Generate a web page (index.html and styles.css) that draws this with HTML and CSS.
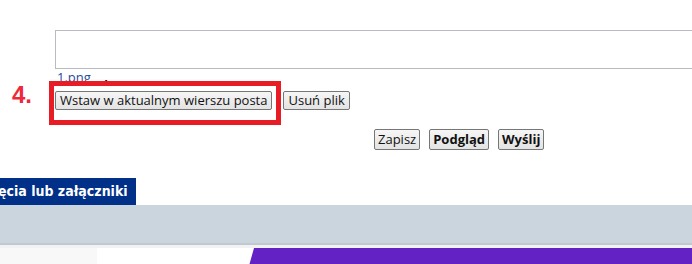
FILE: index.html
```html
<!DOCTYPE html>
<html lang="pl">
<head>
  <meta charset="UTF-8">
  <title>Odpowiedz - załączniki</title>
  <link rel="stylesheet" href="styles.css">
</head>
<body>
  <div class="edytor">
    <textarea class="tresc"></textarea>

    <div class="plik">
      <a href="#" class="plik-nazwa">1.png</a> <span class="plik-kropka">.</span>
    </div>

    <div class="plik-akcje">
      <span class="krok">4.</span>
      <span class="ramka"></span>
      <button class="btn">Wstaw w aktualnym wierszu posta</button>
      <button class="btn">Usuń plik</button>
    </div>

    <div class="wyslij">
      <button class="btn">Zapisz</button>
      <button class="btn mocny">Podgląd</button>
      <button class="btn mocny">Wyślij</button>
    </div>
  </div>

  <div class="zakladki">
    <span class="zakladka">Dodaj zdjęcia lub załączniki</span>
  </div>
  <div class="pasek"></div>

  <div class="stopka">
    <div class="stopka-lewa"></div>
    <div class="stopka-srodek"></div>
    <div class="stopka-fiolet"></div>
  </div>
</body>
</html>
```

FILE: styles.css
```css
body {
  margin: 0;
  font-family: "Open Sans", "Noto Sans", sans-serif;
  background: #fff;
  overflow: hidden;
}
.edytor {
  padding: 30px 0 0 55px;
}
.tresc {
  display: block;
  box-sizing: border-box;
  width: 660px;
  height: 39px;
  margin: 0;
  border: 1px solid #b8bcc0;
  resize: none;
}
.plik {
  height: 12px;
  padding-left: 2px;
  font-size: 13px;
  line-height: 17px;
}
.plik-nazwa {
  color: #1a4f9c;
  text-decoration: underline;
}
.plik-kropka {
  margin-left: 10px;
  font-weight: bold;
}
.plik-akcje {
  position: relative;
  display: flex;
  gap: 11px;
  margin-top: 10px;
}
.krok {
  position: absolute;
  left: -43px;
  top: -10px;
  color: #ee2a3a;
  font-family: "Liberation Sans", Arial, sans-serif;
  font-size: 24px;
  font-weight: bold;
}
.ramka {
  position: absolute;
  left: -6px;
  top: -10px;
  width: 222px;
  height: 34px;
  border: 5px solid #e81c25;
}
.btn {
  position: relative;
  height: 19px;
  padding: 0 4px;
  border: 1px solid #767676;
  border-radius: 2px;
  background: linear-gradient(#f6f6f6, #e3e3e3);
  color: #111;
  font-family: "Open Sans", "Noto Sans", sans-serif;
  font-size: 13px;
  line-height: 17px;
}
.mocny {
  font-weight: bold;
}
.wyslij {
  display: flex;
  gap: 9px;
  margin: 19px 0 0 319px;
}
.wyslij .btn {
  height: 21px;
  padding: 0 3px;
  line-height: 19px;
}
.zakladki {
  margin-top: 28px;
  height: 27px;
}
.zakladka {
  display: inline-block;
  margin-left: -76px;
  padding: 0 8px;
  height: 27px;
  background: #003087;
  color: #fff;
  font-family: "DejaVu Sans Condensed", "DejaVu Sans", sans-serif;
  font-size: 14px;
  font-weight: bold;
  line-height: 26px;
}
.pasek {
  height: 38px;
  background: #cbd5dd;
  border-bottom: 2px solid #c0c9d1;
}
.stopka {
  display: flex;
  height: 25px;
  border-top: 3px solid #f2f2f2;
}
.stopka-lewa {
  width: 97px;
  background: #f8f8f8;
}
.stopka-srodek {
  width: 150px;
}
.stopka-fiolet {
  flex: 1;
  background: #6222c4;
  clip-path: polygon(7px 0, 100% 0, 100% 100%, 0 100%);
}
```
